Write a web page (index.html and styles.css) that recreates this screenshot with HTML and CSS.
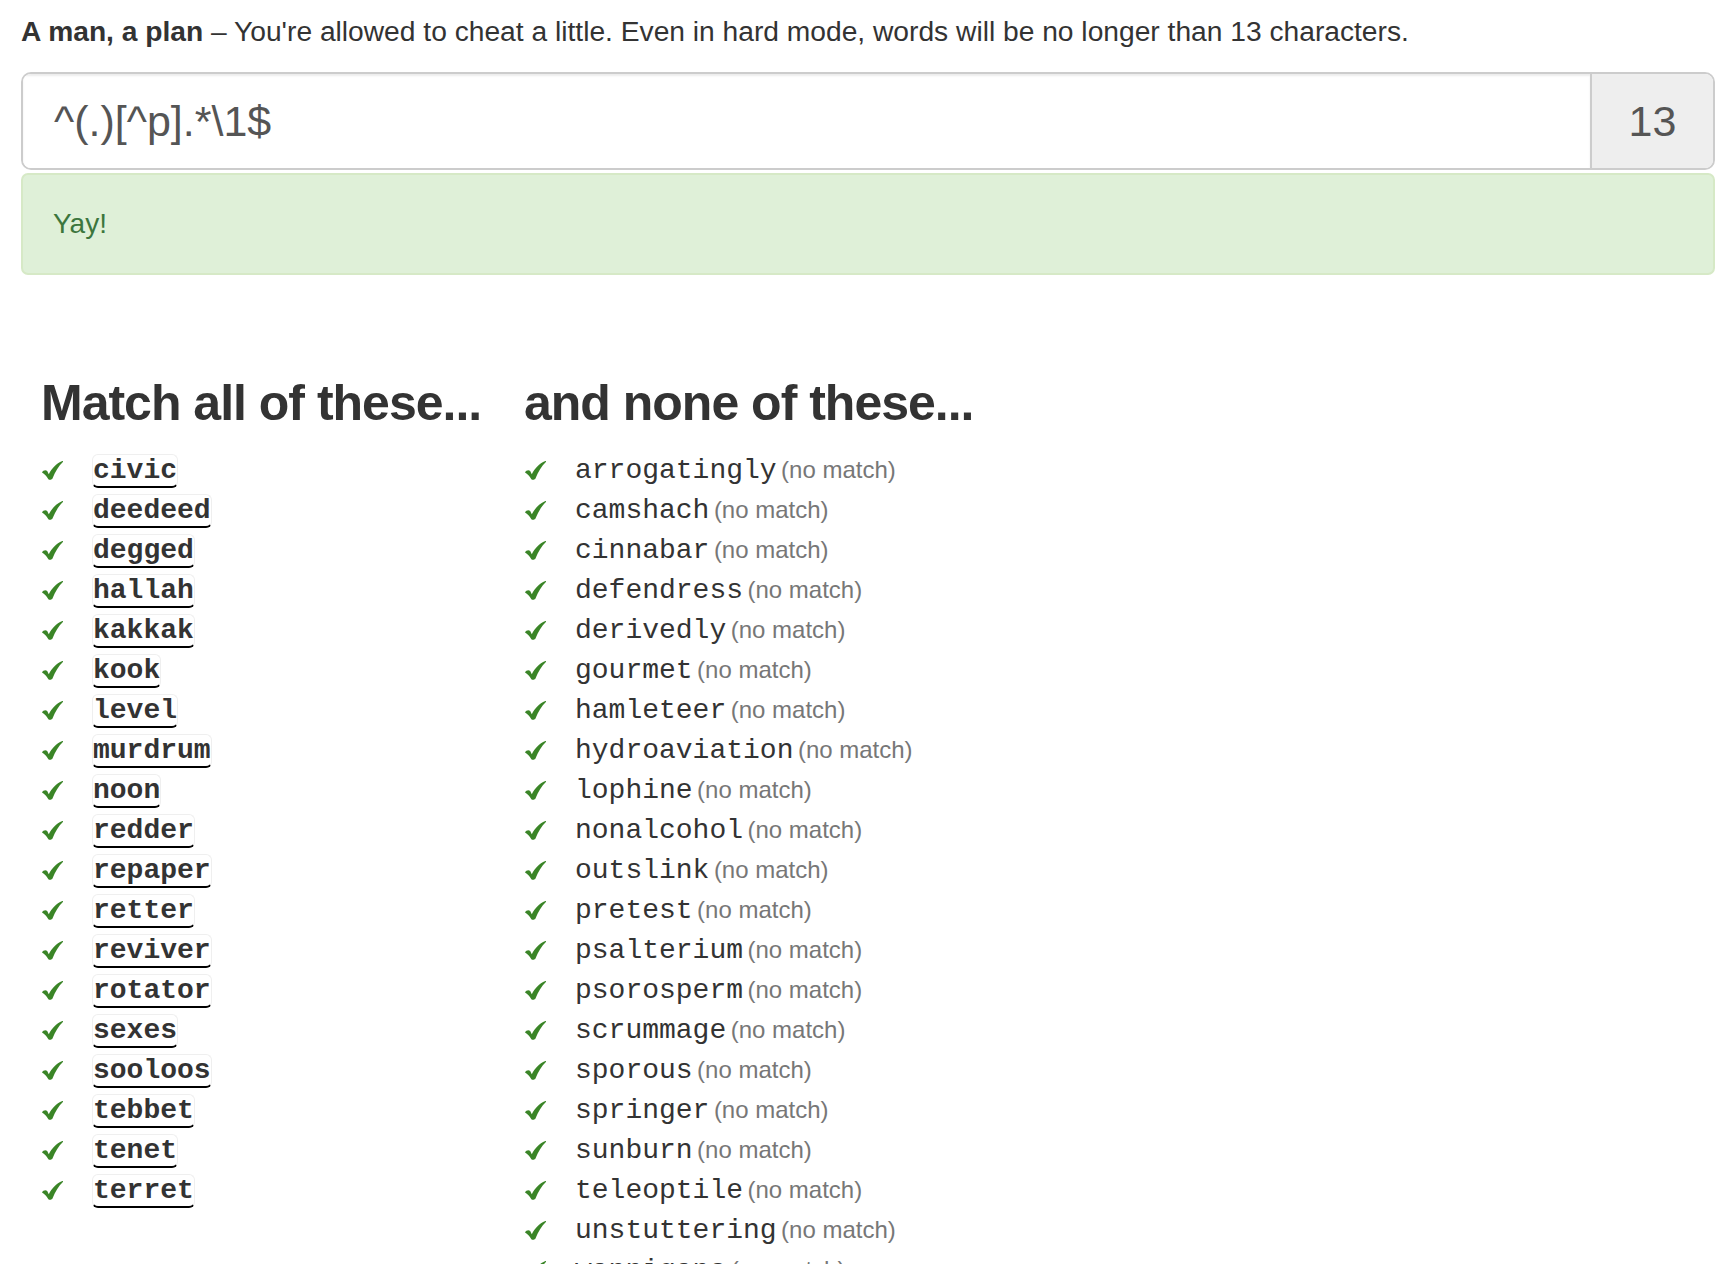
FILE: index.html
```html
<!DOCTYPE html>
<html lang="en">
<head>
<meta charset="utf-8">
<title>Regex golf – A man, a plan</title>
<link rel="stylesheet" href="styles.css">
</head>
<body>
<svg class="defs" width="0" height="0" aria-hidden="true">
  <symbol id="chk" viewBox="0 0 21 19">
    <path d="M0,11.5 C1,9.5 3.5,8.5 5.2,10 L6.8,13.3 C9.8,7.6 14,2.6 20.4,0.1 C21,-0.1 21.3,0.6 20.9,1 C16.6,5 13.2,10.8 10.6,17.3 C10,18.9 7.1,19.4 6.2,17.9 C4.7,15.3 2.5,13 0,11.5 Z"/>
  </symbol>
</svg>
<div class="page">
  <p class="intro"><strong>A man, a plan</strong> – You're allowed to cheat a little. Even in hard mode, words will be no longer than 13 characters.</p>

  <div class="input-group">
    <div class="regex">^(.)[^p].*\1$</div>
    <div class="count">13</div>
  </div>

  <div class="alert">Yay!</div>

  <div class="columns">
    <section class="col col-match">
      <h2>Match all of these...</h2>
      <ul class="list">
        <li><span class="chk"><svg><use href="#chk"/></svg></span><span class="w m">civic</span></li>
        <li><span class="chk"><svg><use href="#chk"/></svg></span><span class="w m">deedeed</span></li>
        <li><span class="chk"><svg><use href="#chk"/></svg></span><span class="w m">degged</span></li>
        <li><span class="chk"><svg><use href="#chk"/></svg></span><span class="w m">hallah</span></li>
        <li><span class="chk"><svg><use href="#chk"/></svg></span><span class="w m">kakkak</span></li>
        <li><span class="chk"><svg><use href="#chk"/></svg></span><span class="w m">kook</span></li>
        <li><span class="chk"><svg><use href="#chk"/></svg></span><span class="w m">level</span></li>
        <li><span class="chk"><svg><use href="#chk"/></svg></span><span class="w m">murdrum</span></li>
        <li><span class="chk"><svg><use href="#chk"/></svg></span><span class="w m">noon</span></li>
        <li><span class="chk"><svg><use href="#chk"/></svg></span><span class="w m">redder</span></li>
        <li><span class="chk"><svg><use href="#chk"/></svg></span><span class="w m">repaper</span></li>
        <li><span class="chk"><svg><use href="#chk"/></svg></span><span class="w m">retter</span></li>
        <li><span class="chk"><svg><use href="#chk"/></svg></span><span class="w m">reviver</span></li>
        <li><span class="chk"><svg><use href="#chk"/></svg></span><span class="w m">rotator</span></li>
        <li><span class="chk"><svg><use href="#chk"/></svg></span><span class="w m">sexes</span></li>
        <li><span class="chk"><svg><use href="#chk"/></svg></span><span class="w m">sooloos</span></li>
        <li><span class="chk"><svg><use href="#chk"/></svg></span><span class="w m">tebbet</span></li>
        <li><span class="chk"><svg><use href="#chk"/></svg></span><span class="w m">tenet</span></li>
        <li><span class="chk"><svg><use href="#chk"/></svg></span><span class="w m">terret</span></li>
      </ul>
    </section>
    <section class="col col-none">
      <h2>and none of these...</h2>
      <ul class="list">
        <li><span class="chk"><svg><use href="#chk"/></svg></span><span class="txt"><span class="w">arrogatingly</span> <span class="nm">(no match)</span></span></li>
        <li><span class="chk"><svg><use href="#chk"/></svg></span><span class="txt"><span class="w">camshach</span> <span class="nm">(no match)</span></span></li>
        <li><span class="chk"><svg><use href="#chk"/></svg></span><span class="txt"><span class="w">cinnabar</span> <span class="nm">(no match)</span></span></li>
        <li><span class="chk"><svg><use href="#chk"/></svg></span><span class="txt"><span class="w">defendress</span> <span class="nm">(no match)</span></span></li>
        <li><span class="chk"><svg><use href="#chk"/></svg></span><span class="txt"><span class="w">derivedly</span> <span class="nm">(no match)</span></span></li>
        <li><span class="chk"><svg><use href="#chk"/></svg></span><span class="txt"><span class="w">gourmet</span> <span class="nm">(no match)</span></span></li>
        <li><span class="chk"><svg><use href="#chk"/></svg></span><span class="txt"><span class="w">hamleteer</span> <span class="nm">(no match)</span></span></li>
        <li><span class="chk"><svg><use href="#chk"/></svg></span><span class="txt"><span class="w">hydroaviation</span> <span class="nm">(no match)</span></span></li>
        <li><span class="chk"><svg><use href="#chk"/></svg></span><span class="txt"><span class="w">lophine</span> <span class="nm">(no match)</span></span></li>
        <li><span class="chk"><svg><use href="#chk"/></svg></span><span class="txt"><span class="w">nonalcohol</span> <span class="nm">(no match)</span></span></li>
        <li><span class="chk"><svg><use href="#chk"/></svg></span><span class="txt"><span class="w">outslink</span> <span class="nm">(no match)</span></span></li>
        <li><span class="chk"><svg><use href="#chk"/></svg></span><span class="txt"><span class="w">pretest</span> <span class="nm">(no match)</span></span></li>
        <li><span class="chk"><svg><use href="#chk"/></svg></span><span class="txt"><span class="w">psalterium</span> <span class="nm">(no match)</span></span></li>
        <li><span class="chk"><svg><use href="#chk"/></svg></span><span class="txt"><span class="w">psorosperm</span> <span class="nm">(no match)</span></span></li>
        <li><span class="chk"><svg><use href="#chk"/></svg></span><span class="txt"><span class="w">scrummage</span> <span class="nm">(no match)</span></span></li>
        <li><span class="chk"><svg><use href="#chk"/></svg></span><span class="txt"><span class="w">sporous</span> <span class="nm">(no match)</span></span></li>
        <li><span class="chk"><svg><use href="#chk"/></svg></span><span class="txt"><span class="w">springer</span> <span class="nm">(no match)</span></span></li>
        <li><span class="chk"><svg><use href="#chk"/></svg></span><span class="txt"><span class="w">sunburn</span> <span class="nm">(no match)</span></span></li>
        <li><span class="chk"><svg><use href="#chk"/></svg></span><span class="txt"><span class="w">teleoptile</span> <span class="nm">(no match)</span></span></li>
        <li><span class="chk"><svg><use href="#chk"/></svg></span><span class="txt"><span class="w">unstuttering</span> <span class="nm">(no match)</span></span></li>
        <li><span class="chk"><svg><use href="#chk"/></svg></span><span class="txt"><span class="w">wannigans</span> <span class="nm">(no match)</span></span></li>
      </ul>
    </section>
  </div>
</div>
</body>
</html>
```

FILE: styles.css
```css
html, body {
  margin: 0;
  padding: 0;
  background: #fff;
}

body {
  font-family: "Liberation Sans", Arial, Helvetica, sans-serif;
  color: #333;
}

.defs {
  position: absolute;
  width: 0;
  height: 0;
  overflow: hidden;
}

.page {
  padding: 11px 19px 0 21px;
}

.intro {
  margin: 0;
  font-size: 28.2px;
  line-height: 40px;
}

.intro strong {
  font-weight: bold;
}

.input-group {
  display: flex;
  margin-top: 21px;
  height: 98px;
  box-sizing: border-box;
  border: 2px solid #ccc;
  border-radius: 10px;
  overflow: hidden;
}

.regex {
  flex: 1;
  display: flex;
  align-items: center;
  padding-left: 31px;
  font-size: 43px;
  color: #555;
  background: #fff;
  box-shadow: inset 0 2px 2px rgba(0, 0, 0, 0.075);
}

.count {
  width: 121px;
  flex: none;
  display: flex;
  align-items: center;
  justify-content: center;
  background: #eee;
  border-left: 2px solid #ccc;
  font-size: 43px;
  color: #555;
}

.alert {
  margin-top: 3px;
  padding: 31px 30px;
  background: #dff0d8;
  border: 2px solid #d6e9c6;
  border-radius: 7px;
  color: #3c763d;
  font-size: 28px;
  line-height: 36px;
}

.columns {
  display: flex;
  margin-top: 101px;
  padding-left: 20px;
}

.col-match {
  width: 483px;
  flex: none;
}

.col h2 {
  margin: 0;
  font-size: 50px;
  line-height: 55px;
  font-weight: bold;
  letter-spacing: -1px;
  color: #333;
}

.list {
  list-style: none;
  margin: 20px 0 0;
  padding: 0;
}

.list li {
  display: flex;
  align-items: center;
  height: 40px;
}

.chk {
  width: 51px;
  flex: none;
  display: flex;
  align-items: center;
}

.chk svg {
  width: 21px;
  height: 19px;
  margin-left: 1px;
  margin-bottom: 2px;
  fill: #3a8527;
}

.w {
  font-family: "Liberation Mono", "Courier New", monospace;
  font-size: 28px;
  color: #333;
}

.m {
  font-weight: bold;
  line-height: 31px;
  border: 1px solid #efefef;
  border-bottom: 2px solid #000;
  border-radius: 6px;
}

.txt {
  line-height: 40px;
  white-space: nowrap;
}

.nm {
  font-size: 24px;
  color: #777;
}
```
